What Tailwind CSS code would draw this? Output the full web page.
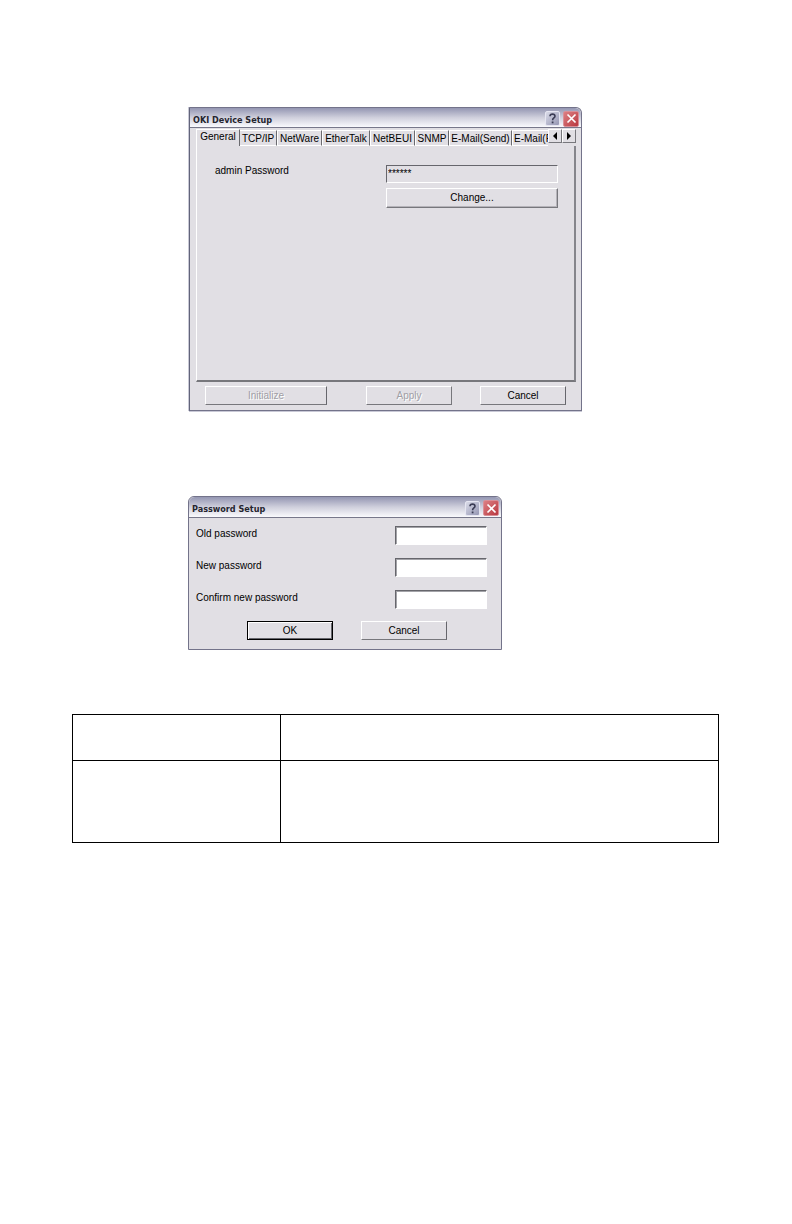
<!DOCTYPE html>
<html lang="en">
<head>
<meta charset="utf-8">
<title>OKI Device Setup</title>
<script src="https://cdn.jsdelivr.net/npm/@tailwindcss/browser@4"></script>
</head>
<body class="min-h-screen bg-white text-black">
<main class="pt-[107px] pr-[73px] pl-18 font-['Liberation_Sans',Arial,sans-serif] text-[10px] leading-3">

  <section aria-label="OKI Device Setup" class="ml-[117px] w-full max-w-[393px] rounded-t-md rounded-tl-none border border-[#73738a] border-l-[#62647a] bg-[#e1dfe4] shadow-[0_1px_0_#c9c9d6,-1px_0_0_#c9c9d6]">
    <header class="flex h-5 items-center gap-1 rounded-tr-md border-b border-[#77778a] bg-linear-to-b from-[#9496b2] via-[#cfcfdc] to-[#fafafd] pt-0.5 pr-[2px] pl-[3px]">
      <h2 class="flex-1 pt-0.5 font-['DejaVu_Sans_Condensed','DejaVu_Sans',sans-serif] text-[9px] font-bold text-[#25252f]">OKI Device Setup</h2>
      <button aria-label="Help" class="flex size-[15px] items-center justify-center rounded-xs border border-[#e6e6f2] bg-linear-to-br from-[#dadbe8] to-[#9596b3]">
        <svg class="size-[13px]" viewBox="0 0 13 13" fill="none"><path d="M4 4.2C4 1.4 9 1.4 9 4.2C9 6 6.6 6 6.6 8.2" stroke="#3b3c55" stroke-width="1.6"/><path d="M5.7 9.5h1.8v1.8H5.7z" fill="#3b3c55"/></svg>
      </button>
      <button aria-label="Close" class="-ml-px flex size-4 items-center justify-center rounded-xs border border-[#d98f97] bg-linear-to-br from-[#dc7f84] to-[#b8363f]">
        <svg class="size-[13px]" viewBox="0 0 13 13"><path d="M2.5 2.5l8 8M10.5 2.5l-8 8" stroke="#fff" stroke-width="1.7"/></svg>
      </button>
    </header>

    <div class="pt-px pr-[5px] pl-[6px]">
      <div class="flex h-[17px]">
        <div role="tablist" class="flex min-w-0 flex-1 overflow-hidden whitespace-nowrap">
          <button role="tab" aria-selected="true" class="flex w-11 shrink-0 justify-center border-t border-r border-l border-t-white border-r-[#6b6b70] border-l-white pt-px">General</button>
          <button role="tab" class="mt-px flex w-[37px] shrink-0 justify-center border-t border-r border-b border-t-white border-r-[#6b6b70] border-b-white pt-0.5">TCP/IP</button>
          <button role="tab" class="mt-px flex w-[45px] shrink-0 justify-center border border-t-white border-r-[#6b6b70] border-b-white border-l-white pt-0.5">NetWare</button>
          <button role="tab" class="mt-px flex w-12 shrink-0 justify-center border border-t-white border-r-[#6b6b70] border-b-white border-l-white pt-0.5">EtherTalk</button>
          <button role="tab" class="mt-px flex w-[45px] shrink-0 justify-center border border-t-white border-r-[#6b6b70] border-b-white border-l-white pt-0.5">NetBEUI</button>
          <button role="tab" class="mt-px flex w-[34px] shrink-0 justify-center border border-t-white border-r-[#6b6b70] border-b-white border-l-white pt-0.5">SNMP</button>
          <button role="tab" class="mt-px flex w-[63px] shrink-0 justify-center border border-t-white border-r-[#6b6b70] border-b-white border-l-white pt-0.5">E-Mail(Send)</button>
          <button role="tab" class="mt-px flex w-20 shrink-0 border border-t-white border-r-[#6b6b70] border-b-white border-l-white pt-0.5 pl-px">E-Mail(R</button>
        </div>
        <div class="flex h-[14px] shrink-0">
          <button aria-label="Scroll tabs left" class="flex w-[14px] items-center justify-center border border-white border-r-[#77777c] border-b-[#77777c]"><svg class="h-2 w-1" viewBox="0 0 4 8"><path d="M4 0v8L0 4z"/></svg></button>
          <button aria-label="Scroll tabs right" class="flex w-[14px] items-center justify-center border border-white border-r-[#77777c] border-b-[#77777c]"><svg class="h-2 w-1" viewBox="0 0 4 8"><path d="M0 0v8l4-4z"/></svg></button>
        </div>
      </div>

      <div role="tabpanel" class="flex min-h-[236px] items-start justify-between border-r-2 border-b-2 border-l border-r-[#85858b] border-b-[#77777c] border-l-white pt-[19px] pr-4 pl-[18px]">
        <label for="admin-password">admin Password</label>
        <div class="flex w-[172px] flex-col gap-[5px]">
          <input id="admin-password" type="text" readonly value="******" class="h-[18px] w-full border border-white border-t-[#66666c] border-l-[#66666c] px-px pb-0.5">
          <button class="h-5 w-full border border-white border-r-[#77777c] border-b-[#77777c] shadow-[inset_-1px_-1px_0_#b5b3b9]">Change...</button>
        </div>
      </div>
    </div>

    <footer class="flex pt-1 pr-[15px] pb-[5px] pl-[15px]">
      <button disabled class="h-[19px] w-[122px] border border-white border-r-[#66666c] border-b-[#77777c] text-[#a09ea5] [text-shadow:1px_1px_0_#fff]">Initialize</button>
      <button disabled class="mr-7 ml-auto h-[19px] w-[86px] border border-white border-r-[#77777c] border-b-[#77777c] text-[#a09ea5] [text-shadow:1px_1px_0_#fff]">Apply</button>
      <button class="h-[19px] w-[86px] border border-white border-r-[#66666c] border-b-[#77777c]">Cancel</button>
    </footer>
  </section>

  <section aria-label="Password Setup" class="mt-[85px] ml-[116px] w-full max-w-[314px] rounded-t-md border border-[#73738a] bg-[#e1dfe4]">
    <header class="flex h-[21px] items-center gap-1 rounded-t-md border-b border-[#77778a] bg-linear-to-b from-[#9496b2] via-[#cfcfdc] to-[#fafafd] pt-0.5 pr-[2px] pl-[3px]">
      <h2 class="flex-1 pt-0.5 font-['DejaVu_Sans_Condensed','DejaVu_Sans',sans-serif] text-[9px] font-bold text-[#25252f]">Password Setup</h2>
      <button aria-label="Help" class="flex size-[15px] items-center justify-center rounded-xs border border-[#e6e6f2] bg-linear-to-br from-[#dadbe8] to-[#9596b3]">
        <svg class="size-[13px]" viewBox="0 0 13 13" fill="none"><path d="M4 4.2C4 1.4 9 1.4 9 4.2C9 6 6.6 6 6.6 8.2" stroke="#3b3c55" stroke-width="1.6"/><path d="M5.7 9.5h1.8v1.8H5.7z" fill="#3b3c55"/></svg>
      </button>
      <button aria-label="Close" class="-ml-px flex size-4 items-center justify-center rounded-xs border border-[#d98f97] bg-linear-to-br from-[#dc7f84] to-[#b8363f]">
        <svg class="size-[13px]" viewBox="0 0 13 13"><path d="M2.5 2.5l8 8M10.5 2.5l-8 8" stroke="#fff" stroke-width="1.7"/></svg>
      </button>
    </header>
    <form class="pt-2 pb-[9px]">
      <div class="flex flex-col gap-[13px] pr-[14px] pl-[7px]">
        <div class="flex items-start justify-between"><label for="old" class="pt-0.5">Old password</label><input id="old" type="password" class="h-[19px] w-[92px] border border-white border-t-[#66666c] border-l-[#66666c] bg-white shadow-[inset_1px_1px_0_#a3a3a8]"></div>
        <div class="flex items-start justify-between"><label for="new" class="pt-0.5">New password</label><input id="new" type="password" class="h-[19px] w-[92px] border border-white border-t-[#66666c] border-l-[#66666c] bg-white shadow-[inset_1px_1px_0_#a3a3a8]"></div>
        <div class="flex items-start justify-between"><label for="confirm" class="pt-0.5">Confirm new password</label><input id="confirm" type="password" class="h-[19px] w-[92px] border border-white border-t-[#66666c] border-l-[#66666c] bg-white shadow-[inset_1px_1px_0_#a3a3a8]"></div>
      </div>
      <div class="mt-3 flex gap-7 pl-[58px]">
        <button type="submit" class="h-[19px] w-[86px] border border-black shadow-[inset_1px_1px_0_#fff,inset_-1px_-1px_0_#66666c]">OK</button>
        <button type="button" class="h-[19px] w-[86px] border border-white border-r-[#66666c] border-b-[#77777c]">Cancel</button>
      </div>
    </form>
  </section>

  <table class="mt-16 w-full table-fixed border-collapse border border-black">
    <colgroup><col class="w-[208px]"><col></colgroup>
    <tbody>
      <tr class="h-[46px]"><td class="border border-black"></td><td class="border border-black"></td></tr>
      <tr class="h-[82px]"><td class="border border-black"></td><td class="border border-black"></td></tr>
    </tbody>
  </table>
</main>
</body>
</html>
